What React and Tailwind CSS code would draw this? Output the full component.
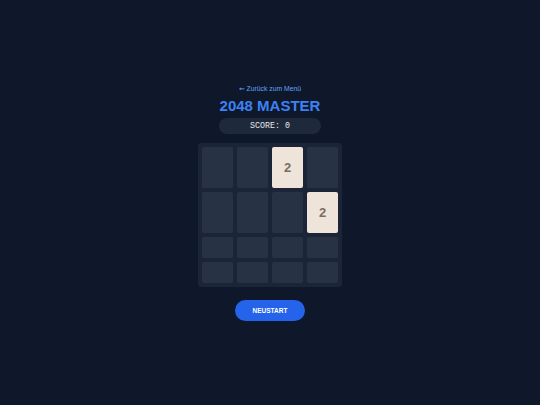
import React from "react";

const board = [
  [0, 0, 2, 0],
  [0, 0, 0, 2],
  [0, 0, 0, 0],
  [0, 0, 0, 0],
];
const rowH = ["h-[41px]", "h-[41px]", "h-[21px]", "h-[21px]"];

export default function App() {
  return (
    <div
      className="min-h-screen w-full bg-[#0f172a] flex flex-col items-center justify-center"
      style={{ fontFamily: '"Liberation Sans", Arial, sans-serif' }}
    >
      <a className="text-[6.8px] leading-[9px] h-[9px] text-[#60a5fa]">
        <span style={{ fontFamily: '"DejaVu Sans", sans-serif' }}>←</span> Zurück zum Menü
      </a>
      <h1 className="mt-[4px] text-[15px] leading-[18px] font-bold text-[#3b82f6]">2048 MASTER</h1>
      <div
        className="mt-[3px] w-[102px] h-[16px] rounded-full bg-[#1e293b] flex items-center justify-center text-[8.3px] text-[#e5e7eb]"
        style={{ fontFamily: '"Liberation Mono", "Courier New", monospace' }}
      >
        SCORE: 0
      </div>
      <div className="mt-[9px] w-[144px] p-[4px] rounded-[3px] bg-[#1b2537] flex flex-col gap-[4px]">
        {board.map((row, r) => (
          <div key={r} className={`flex gap-[4px] ${rowH[r]}`}>
            {row.map((v, c) =>
              v ? (
                <div
                  key={c}
                  className="w-[31px] h-full rounded-[2px] bg-[#eee4da] flex items-center justify-center text-[13px] font-bold text-[#776e65]"
                >
                  {v}
                </div>
              ) : (
                <div key={c} className="w-[31px] h-full rounded-[2px] bg-[#273345]" />
              )
            )}
          </div>
        ))}
      </div>
      <button className="mt-[13px] w-[70px] h-[21px] rounded-full bg-[#2563eb] text-white text-[6.5px] font-bold flex items-center justify-center">
        NEUSTART
      </button>
    </div>
  );
}
